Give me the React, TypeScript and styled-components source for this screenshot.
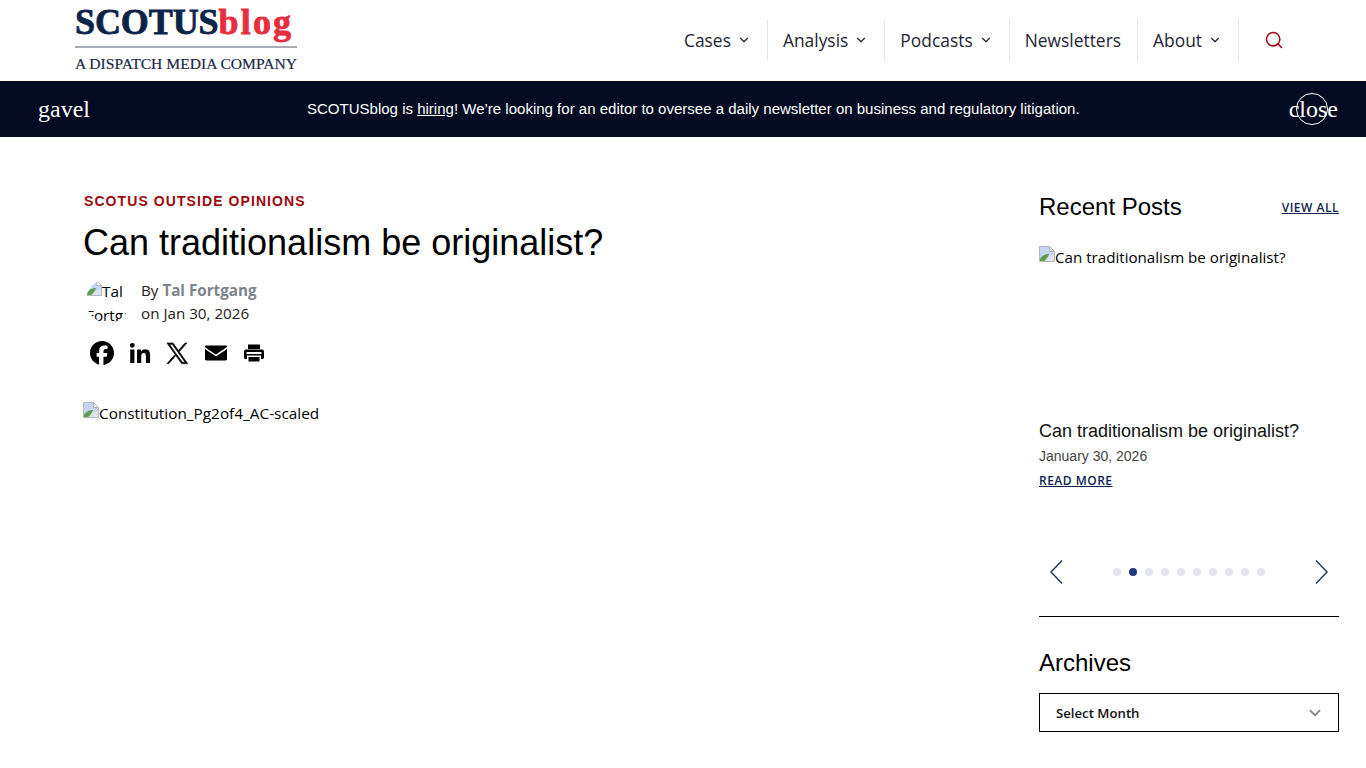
import React from 'react';
import styled, { createGlobalStyle } from 'styled-components';
import { ChevronDown, Search } from 'lucide-react';

const GlobalStyle = createGlobalStyle`
  html, body {
    margin: 0;
    padding: 0;
    background: #fff;
    overflow: hidden;
  }
  * { box-sizing: border-box; }
`;

const Page = styled.div`
  width: 1366px;
  height: 768px;
  overflow: hidden;
  font-family: "Open Sans", "Noto Sans", sans-serif;
  color: #000;
`;

const Header = styled.header`
  height: 81px;
  display: flex;
  justify-content: space-between;
  padding: 0 58px 0 75px;
  background: #fff;
`;

const Logo = styled.a`
  display: block;
  width: 222px;
  height: 81px;
  font-family: "Liberation Serif", serif;
`;

const LogoMark = styled.div`
  height: 48px;
  padding-top: 1px;
  border-bottom: 2px solid #a9acb3;
  font-size: 36px;
  line-height: 42px;
  font-weight: 700;
  color: #0c2348;
  white-space: nowrap;
  letter-spacing: -0.1px;
  -webkit-text-stroke: 0.8px #0c2348;
`;

const LogoAccent = styled.span`
  color: #e72d40;
  letter-spacing: 2.2px;
  -webkit-text-stroke: 0.8px #e72d40;
`;

const LogoTag = styled.div`
  margin-top: 6px;
  font-size: 15.6px;
  line-height: 19px;
  color: #1c2a48;
  white-space: nowrap;
  -webkit-text-stroke: 0.2px #1c2a48;
`;

const Nav = styled.nav`
  display: flex;
  align-items: flex-start;
  padding-top: 20px;
`;

const NavItem = styled.a`
  height: 41px;
  display: flex;
  align-items: center;
  gap: 6px;
  padding: 0 16px 2px 15px;
  border-right: 1px solid #e3e4e6;
  font-size: 17.4px;
  font-weight: 500;
  color: #1d2433;
  white-space: nowrap;
`;

const SearchButton = styled.button`
  width: 69px;
  height: 41px;
  padding: 0 0 2px;
  display: flex;
  align-items: center;
  justify-content: center;
  background: none;
  border: 0;
  color: #a50d12;
`;

const Banner = styled.div`
  height: 56px;
  display: flex;
  align-items: center;
  justify-content: space-between;
  padding: 0 28px 0 38px;
  background: #030b22;
  color: #fff;
`;

const BannerIcon = styled.span`
  font-family: "Liberation Serif", serif;
  font-size: 24px;
  line-height: 28px;
`;

const BannerText = styled.p`
  margin: 0 0 0 8px;
  font-family: "Liberation Sans", Arial, sans-serif;
  font-size: 15.03px;
  line-height: 20px;
`;

const BannerLink = styled.a`
  color: #fff;
  text-decoration: underline;
`;

const CloseWrap = styled.span`
  position: relative;
  display: block;
`;

const CloseRing = styled.span`
  position: absolute;
  top: -2px;
  left: 7px;
  width: 32px;
  height: 32px;
  border: 1px solid #fff;
  border-radius: 50%;
`;

const Main = styled.main`
  display: flex;
  justify-content: space-between;
  padding: 0 27px 0 83px;
`;

const Article = styled.article`
  padding-top: 55px;
`;

const Kicker = styled.div`
  padding-left: 1px;
  font-family: "Liberation Sans", Arial, sans-serif;
  font-size: 14px;
  line-height: 18px;
  font-weight: 700;
  letter-spacing: 1.08px;
  color: #9d0a0e;
`;

const Title = styled.h1`
  margin: 13px 0 0;
  font-family: "Liberation Sans", Arial, sans-serif;
  font-size: 36px;
  line-height: 40px;
  font-weight: 400;
`;

const Byline = styled.div`
  display: flex;
  margin-top: 16px;
  padding-left: 3px;
`;

const Avatar = styled.div`
  width: 44px;
  height: 44px;
  overflow: hidden;
  border-radius: 50%;
  font-size: 15.3px;
  line-height: 24px;
`;

const ByText = styled.div`
  margin-left: 11px;
  font-size: 15.2px;
  line-height: 23px;
  color: #222;
`;

const Author = styled.span`
  font-weight: 700;
  color: #7c858d;
`;

const Share = styled.div`
  display: flex;
  gap: 6px;
  margin-top: 12px;
  padding-left: 3px;
`;

const ShareIcon = styled.svg`
  display: block;
  width: 32px;
  height: 32px;
  fill: #000;
`;

const BrokenImage = styled.span`
  display: inline-block;
  vertical-align: top;
  font-size: 15.35px;
  line-height: 24px;
  color: #000;
  white-space: nowrap;
`;

const BrokenIconSvg = styled.svg`
  display: inline-block;
  width: 16px;
  height: 16px;
  vertical-align: 1px;
`;

const HeroImage = styled.div`
  margin-top: 32px;
`;

const Sidebar = styled.aside`
  width: 300px;
  padding-top: 54px;
`;

const SideHead = styled.div`
  display: flex;
  justify-content: space-between;
  align-items: center;
  height: 32px;
`;

const SideTitle = styled.h2`
  margin: 0;
  font-family: "Liberation Sans", Arial, sans-serif;
  font-size: 24px;
  line-height: 32px;
  font-weight: 400;
`;

const SmallLink = styled.a`
  font-size: 12px;
  line-height: 16px;
  font-weight: 600;
  letter-spacing: 0.5px;
  color: #0e2350;
  text-decoration: underline;
`;

const ViewAll = styled(SmallLink)`
  margin-top: 2px;
`;

const Thumb = styled.div`
  height: 169px;
  margin-top: 22px;

  ${BrokenImage} {
    font-size: 15.15px;
  }
`;

const PostTitle = styled.div`
  margin-top: 5px;
  font-family: "Liberation Sans", Arial, sans-serif;
  font-size: 18px;
  line-height: 24px;
  color: #111;
`;

const PostDate = styled.div`
  margin: 3px 0 2px;
  font-family: "Liberation Sans", Arial, sans-serif;
  font-size: 14px;
  line-height: 20px;
  color: #444;
`;

const Pager = styled.div`
  display: flex;
  align-items: center;
  justify-content: space-between;
  height: 32px;
  margin-top: 66px;
  padding: 0 11px;
`;

const Dots = styled.div`
  display: flex;
  gap: 8px;
  margin-left: -1px;
`;

const Dot = styled.span<{ $active?: boolean }>`
  width: 8px;
  height: 8px;
  border-radius: 50%;
  background: ${p => (p.$active ? '#1f3a80' : '#e4e6ef')};
`;

const Rule = styled.hr`
  height: 1px;
  margin: 28px 0 30px;
  border: 0;
  background: #000;
`;

const SelectBox = styled.div`
  display: flex;
  align-items: center;
  justify-content: space-between;
  height: 39px;
  margin-top: 14px;
  padding: 0 14px 0 16px;
  border: 1px solid #000;
  font-size: 13.2px;
  font-weight: 600;
  color: #111;
`;

const BrokenIcon = () => (
  <BrokenIconSvg viewBox="0 0 16 16">
    <path d="M.5.5h10l5 5v10H.5z" fill="#dfe3ea" stroke="#b4b7bd" />
    <path d="M1 1h9v5h5v3L1 13z" fill="#c6d6f2" />
    <path d="M10.5.5v5h5z" fill="#f4f5f7" stroke="#b4b7bd" />
    <path d="M1 15v-2.5C4 9 7 7.5 10 8c-1 3-2.5 5.5-5 7z" fill="#5f9e4a" />
  </BrokenIconSvg>
);

const Arrow = ({ flip }: { flip?: boolean }) => (
  <svg width="13" height="24" viewBox="0 0 13 24" fill="none" stroke="#1f3a70" strokeWidth="1.5">
    <path d={flip ? 'M1 .5L12 12 1 23.5' : 'M12 .5L1 12l11 11.5'} />
  </svg>
);

const navItems = [
  { label: 'Cases', caret: true },
  { label: 'Analysis', caret: true },
  { label: 'Podcasts', caret: true },
  { label: 'Newsletters', caret: false },
  { label: 'About', caret: true },
];

const sharePaths = [
  'M28 16c0-6.627-5.373-12-12-12S4 9.373 4 16c0 5.628 3.875 10.35 9.101 11.647v-7.98h-2.474V16H13.1v-1.58c0-4.085 1.849-5.978 5.859-5.978.76 0 2.072.15 2.608.298v3.325c-.283-.03-.775-.045-1.386-.045-1.967 0-2.728.745-2.728 2.683V16h3.92l-.673 3.667h-3.247v8.245C23.395 27.195 28 22.135 28 16',
  'M6.227 12.61h4.19v13.48h-4.19zm2.095-6.7a2.43 2.43 0 0 1 0 4.86c-1.344 0-2.428-1.09-2.428-2.43s1.084-2.43 2.428-2.43m4.72 6.7h4.02v1.84h.058c.56-1.058 1.927-2.176 3.965-2.176 4.238 0 5.02 2.792 5.02 6.42v7.395h-4.183v-6.56c0-1.564-.03-3.574-2.178-3.574-2.18 0-2.514 1.7-2.514 3.46v6.668h-4.187z',
  'M17.18 14.76 24.9 6h-1.83l-6.7 7.6L11 6H5l8.1 11.46L5 26.6h1.83l7.08-8.03L19.6 26.6h6zM14.7 17.52l-.82-1.14L7.43 7.32h2.81l5.27 7.3.82 1.14 6.85 9.5h-2.81z',
  'M27 21.775v-9.9s-10.01 6.985-10.982 7.348C15.058 18.878 5 11.875 5 11.875v9.9c0 1.375.293 1.65 1.65 1.65h18.7c1.393 0 1.65-.242 1.65-1.65m-.017-11.841c0-1.002-.291-1.359-1.633-1.359H6.65c-1.38 0-1.65.429-1.65 1.43l.016.154s9.939 6.842 11 7.216C17.14 16.941 26.983 10.005 26.983 10.005z',
  'M10 7.5h12V12H10zM8 12.5h16a2 2 0 0 1 2 2v6a1.5 1.5 0 0 1-1.5 1.5H23v-3.5H9V22H7.5A1.5 1.5 0 0 1 6 20.5v-6a2 2 0 0 1 2-2zM8.5 15v2h15v-2zM10.5 20h11v4.5h-11z',
];

export default function App() {
  return (
    <Page>
      <GlobalStyle />
      <Header>
        <Logo>
          <LogoMark>
            SCOTUS<LogoAccent>blog</LogoAccent>
          </LogoMark>
          <LogoTag>A DISPATCH MEDIA COMPANY</LogoTag>
        </Logo>
        <Nav>
          {navItems.map(item => (
            <NavItem key={item.label}>
              {item.label}
              {item.caret && <ChevronDown size={14} strokeWidth={2} />}
            </NavItem>
          ))}
          <SearchButton aria-label="Search">
            <Search size={20} strokeWidth={1.9} />
          </SearchButton>
        </Nav>
      </Header>

      <Banner>
        <BannerIcon>gavel</BannerIcon>
        <BannerText>
          SCOTUSblog is <BannerLink>hiring</BannerLink>! We’re looking for an editor to oversee a daily newsletter on
          business and regulatory litigation.
        </BannerText>
        <CloseWrap>
          <BannerIcon>close</BannerIcon>
          <CloseRing />
        </CloseWrap>
      </Banner>

      <Main>
        <Article>
          <Kicker>SCOTUS OUTSIDE OPINIONS</Kicker>
          <Title>Can traditionalism be originalist?</Title>
          <Byline>
            <Avatar>
              <BrokenIcon />
              Tal Fortgang
            </Avatar>
            <ByText>
              By <Author>Tal Fortgang</Author>
              <br />
              on Jan 30, 2026
            </ByText>
          </Byline>
          <Share>
            {sharePaths.map((d, i) => (
              <ShareIcon key={d} viewBox="0 0 32 32">
                <path d={d} fillRule="evenodd" stroke={i === 2 ? '#000' : 'none'} strokeWidth={0.7} />
              </ShareIcon>
            ))}
          </Share>
          <HeroImage>
            <BrokenImage>
              <BrokenIcon />
              Constitution_Pg2of4_AC-scaled
            </BrokenImage>
          </HeroImage>
        </Article>

        <Sidebar>
          <SideHead>
            <SideTitle>Recent Posts</SideTitle>
            <ViewAll>VIEW ALL</ViewAll>
          </SideHead>
          <Thumb>
            <BrokenImage>
              <BrokenIcon />
              Can traditionalism be originalist?
            </BrokenImage>
          </Thumb>
          <PostTitle>Can traditionalism be originalist?</PostTitle>
          <PostDate>January 30, 2026</PostDate>
          <SmallLink>READ MORE</SmallLink>
          <Pager>
            <Arrow />
            <Dots>
              {Array.from({ length: 10 }, (_, i) => (
                <Dot key={i} $active={i === 1} />
              ))}
            </Dots>
            <Arrow flip />
          </Pager>
          <Rule />
          <SideTitle>Archives</SideTitle>
          <SelectBox>
            Select Month
            <ChevronDown size={18} color="#8a8a8a" strokeWidth={2.4} />
          </SelectBox>
        </Sidebar>
      </Main>
    </Page>
  );
}
